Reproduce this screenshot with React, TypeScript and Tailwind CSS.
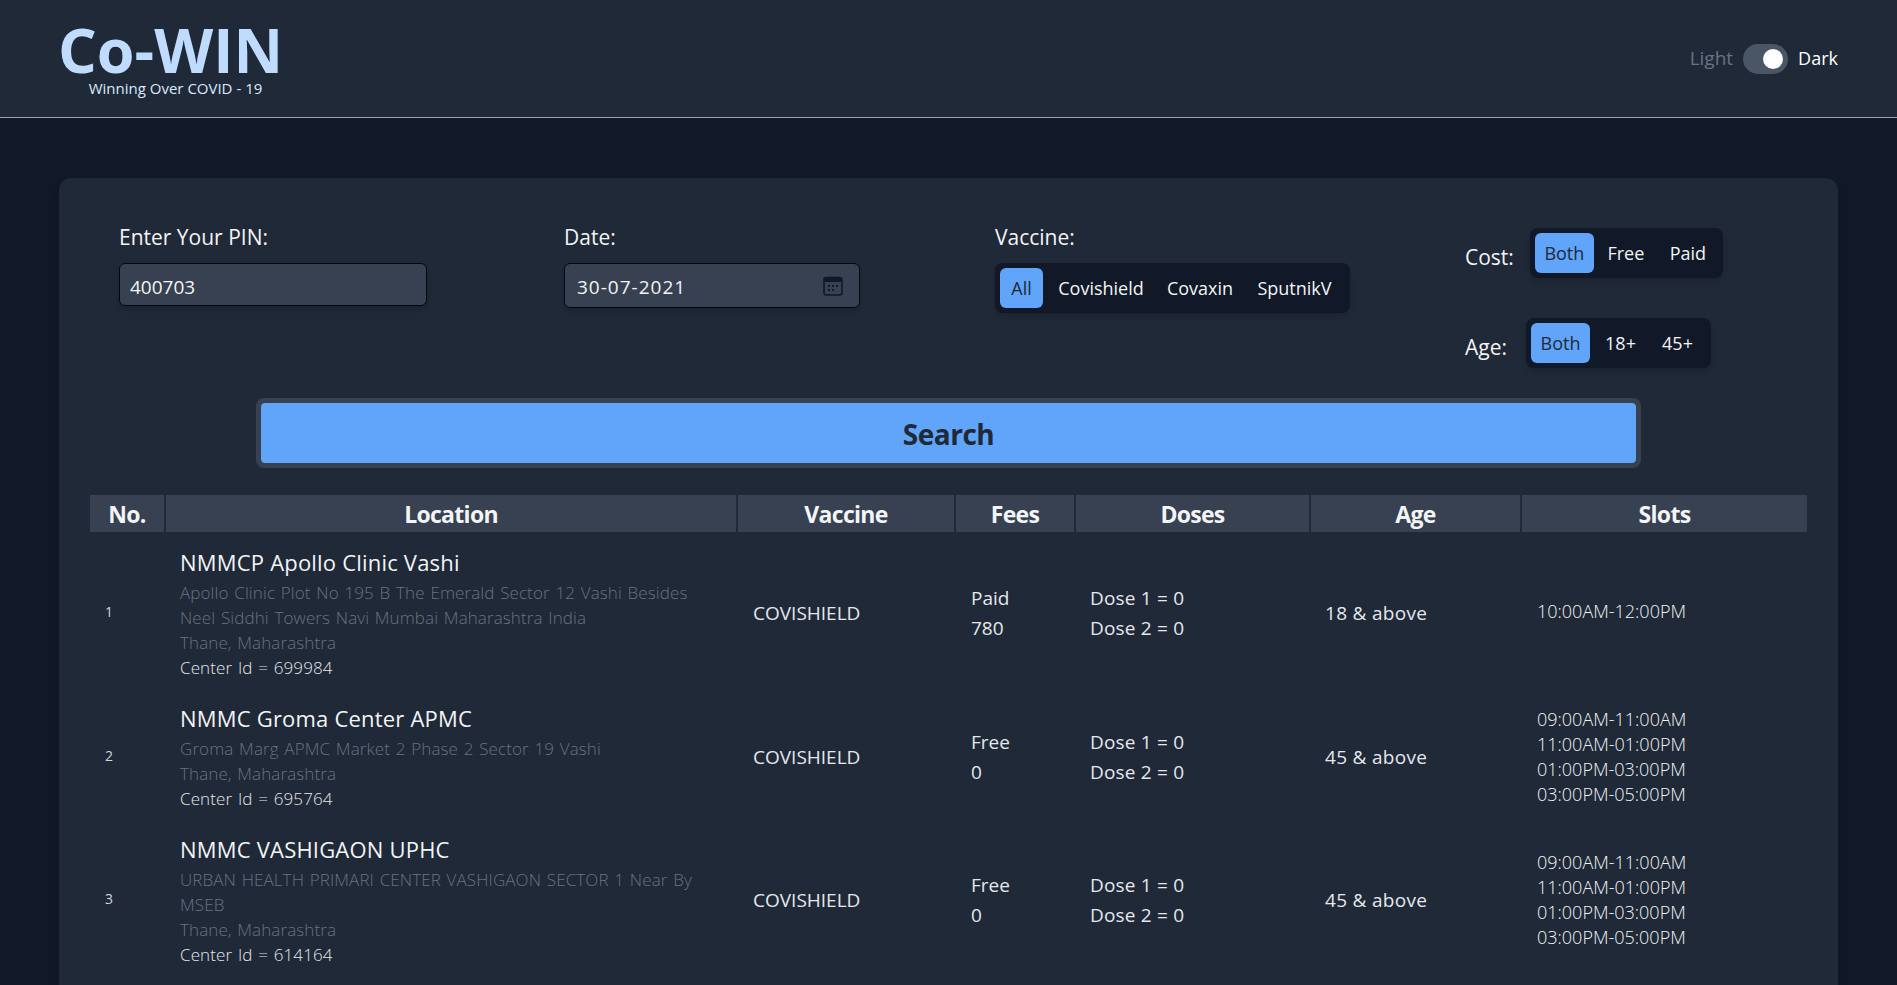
const rows = [
  {
    no: 1,
    name: "NMMCP Apollo Clinic Vashi",
    address: "Apollo Clinic Plot No 195 B The Emerald Sector 12 Vashi Besides Neel Siddhi Towers Navi Mumbai Maharashtra India",
    id: 699984,
    fee: "Paid",
    price: 780,
    age: "18 & above",
    slots: ["10:00AM-12:00PM"],
    height: "h-[162px]",
  },
  {
    no: 2,
    name: "NMMC Groma Center APMC",
    address: "Groma Marg APMC Market 2 Phase 2 Sector 19 Vashi",
    id: 695764,
    fee: "Free",
    price: 0,
    age: "45 & above",
    slots: ["09:00AM-11:00AM", "11:00AM-01:00PM", "01:00PM-03:00PM", "03:00PM-05:00PM"],
    height: "h-[126px]",
  },
  {
    no: 3,
    name: "NMMC VASHIGAON UPHC",
    address: "URBAN HEALTH PRIMARI CENTER VASHIGAON SECTOR 1 Near By MSEB",
    id: 614164,
    fee: "Free",
    price: 0,
    age: "45 & above",
    slots: ["09:00AM-11:00AM", "11:00AM-01:00PM", "01:00PM-03:00PM", "03:00PM-05:00PM"],
    height: "h-[160px]",
  },
];

function Segment({ items, active = 0, className = "" }: { items: { label: string; cls: string }[]; active?: number; className?: string }) {
  return (
    <div className={`flex h-[50px] items-center rounded-lg bg-[#111827] p-[5px] shadow-md ${className}`}>
      {items.map((item, i) => (
        <button
          key={item.label}
          className={`h-10 rounded-md text-[18px] ${item.cls} ${i === active ? "bg-[#60a5fa] text-[#1f2937]" : "text-gray-100"}`}
        >
          {item.label}
        </button>
      ))}
    </div>
  );
}

function CalendarIcon() {
  return (
    <svg width="20" height="20" viewBox="0 0 20 20" fill="none" className="text-[#111827]">
      <rect x="1" y="1.5" width="18" height="17.5" rx="2.5" stroke="currentColor" strokeWidth="1.6" />
      <rect x="1" y="1.5" width="18" height="4.5" rx="2" fill="currentColor" />
      <g fill="currentColor">
        <rect x="5" y="9" width="2" height="2" />
        <rect x="9" y="9" width="2" height="2" />
        <rect x="13" y="9" width="2" height="2" />
        <rect x="5" y="13" width="2" height="2" />
        <rect x="9" y="13" width="2" height="2" />
      </g>
    </svg>
  );
}

const th = "border-l-2 border-[#1f2937] pt-[2px] text-center text-[23px] font-bold tracking-[-0.7px] text-gray-100 first:border-l-0";
const td = "py-0 pl-4 pr-4 align-middle text-[19px] text-gray-200";
const detail = "max-w-[530px] text-[17px] font-light leading-[25px] tracking-[0.1px] [word-spacing:1.2px]";

export default function App() {
  return (
    <div className="h-screen overflow-hidden bg-[#111827] font-['Open_Sans',sans-serif] text-gray-100">
      <header className="flex h-[118px] items-center justify-between border-b border-gray-400 bg-[#1f2937] pl-[60px] pr-[59px]">
        <div className="flex w-[221px] flex-col items-center pt-[3px]">
          <h1 className="h-14 whitespace-nowrap text-[61px] font-bold leading-14 text-[#bfdbfe]">Co-WIN</h1>
          <p className="whitespace-nowrap pl-[10px] text-[15px] leading-5 text-[#dbeafe]">Winning Over COVID - 19</p>
        </div>
        <div className="flex items-center gap-[10px]">
          <span className="text-[19px] text-gray-500">Light</span>
          <div className="flex h-[30px] w-[45px] items-center justify-end rounded-full bg-gray-600 pr-[5px]">
            <div className="h-5 w-5 rounded-full bg-white" />
          </div>
          <span className="text-[18px] text-white">Dark</span>
        </div>
      </header>

      <main className="px-[59px] pt-[60px]">
        <section className="rounded-xl bg-[#1f2937] px-[31px] pb-10 pt-[45px] shadow-lg">
          <div className="flex items-start pl-[29px]">
            <div className="w-[445px]">
              <label className="block text-[21px] leading-7">Enter Your PIN:</label>
              <input
                readOnly
                value="400703"
                className="mt-3 block h-[43px] w-[308px] rounded-md border border-[#030712] bg-[#374151] px-[10px] pt-1 text-[19px] text-gray-100 shadow-md outline-none"
              />
            </div>
            <div className="w-[431px]">
              <label className="block text-[21px] leading-7">Date:</label>
              <div className="mt-3 flex h-[45px] w-[296px] items-center justify-between rounded-md border border-[#030712] bg-[#374151] pl-3 pr-4 shadow-md">
                <span className="pt-1 text-[19px] tracking-[1px]">30-07-2021</span>
                <CalendarIcon />
              </div>
            </div>
            <div className="w-[470px]">
              <label className="block text-[21px] leading-7">Vaccine:</label>
              <Segment
                className="mt-3 w-[355px]"
                items={[
                  { label: "All", cls: "w-[43px]" },
                  { label: "Covishield", cls: "ml-[3px] w-[110px]" },
                  { label: "Covaxin", cls: "w-[88px]" },
                  { label: "SputnikV", cls: "w-[101px]" },
                ]}
              />
            </div>
            <div className="mt-[5px] flex flex-col gap-10">
              <div className="flex items-center gap-4">
                <span className="mt-2 text-[21px] leading-7">Cost:</span>
                <Segment
                  className="w-[193px]"
                  items={[
                    { label: "Both", cls: "w-[59px]" },
                    { label: "Free", cls: "w-[64px]" },
                    { label: "Paid", cls: "w-[60px]" },
                  ]}
                />
              </div>
              <div className="flex items-center gap-[19px]">
                <span className="mt-2 text-[21px] leading-7">Age:</span>
                <Segment
                  className="w-[185px]"
                  items={[
                    { label: "Both", cls: "w-[59px]" },
                    { label: "18+", cls: "w-[61px]" },
                    { label: "45+", cls: "w-[53px]" },
                  ]}
                />
              </div>
            </div>
          </div>

          <div className="mx-auto mt-[30px] w-[1385px] rounded-lg border-[5px] border-[#374151]">
            <button className="block h-[60px] w-full rounded-sm bg-[#60a5fa] pt-[2px] text-[28px] font-bold tracking-[-0.5px] text-[#1f2937]">
              Search
            </button>
          </div>

          <table className="mt-[27px] w-full table-fixed border-collapse">
            <colgroup>
              <col className="w-[75px]" />
              <col className="w-[572px]" />
              <col className="w-[218px]" />
              <col className="w-[120px]" />
              <col className="w-[235px]" />
              <col className="w-[211px]" />
              <col />
            </colgroup>
            <thead>
              <tr className="h-[37px] bg-[#374151]">
                <th className={th}>No.</th>
                <th className={th}>Location</th>
                <th className={th}>Vaccine</th>
                <th className={th}>Fees</th>
                <th className={th}>Doses</th>
                <th className={th}>Age</th>
                <th className={th}>Slots</th>
              </tr>
            </thead>
            <tbody>
              {rows.map((r) => (
                <tr key={r.no} className={r.height}>
                  <td className="pb-[2px] pl-[15px] pr-4 pt-0 align-middle text-sm text-gray-300">{r.no}</td>
                  <td className="py-0 pl-[15px] pr-4 align-middle">
                    <div className="pb-[3px] text-[22px] leading-[30px] tracking-[0.2px] text-gray-100">{r.name}</div>
                    <div className={`${detail} text-gray-500`}>{r.address}</div>
                    <div className={`${detail} text-gray-500`}>Thane, Maharashtra</div>
                    <div className={`${detail} text-gray-200`}>Center Id = {r.id}</div>
                  </td>
                  <td className={td}>COVISHIELD</td>
                  <td className={`${td} text-[18px] leading-[30px]`}>
                    <div>{r.fee}</div>
                    <div>{r.price}</div>
                  </td>
                  <td className={`${td} pl-[15px] leading-[30px] tracking-[0.2px]`}>
                    <div>Dose 1 = 0</div>
                    <div>Dose 2 = 0</div>
                  </td>
                  <td className={`${td} pl-[15px] tracking-[0.3px]`}>{r.age}</td>
                  <td className={`px-4 py-0 align-middle text-[18px] font-light leading-[25px] text-gray-100 ${r.slots.length === 1 ? "pb-1" : ""}`}>
                    {r.slots.map((s) => (
                      <div key={s}>{s}</div>
                    ))}
                  </td>
                </tr>
              ))}
            </tbody>
          </table>
        </section>
      </main>
    </div>
  );
}
